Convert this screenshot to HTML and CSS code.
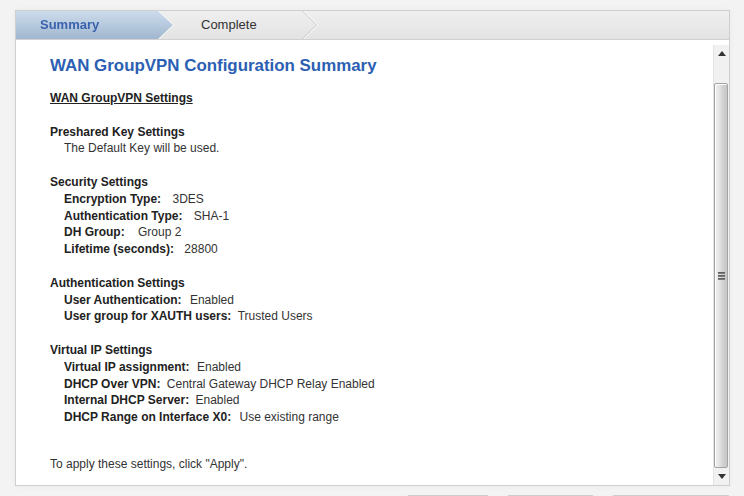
FILE: index.html
```html
<!DOCTYPE html>
<html>
<head>
<meta charset="utf-8">
<link rel="stylesheet" href="styles.css">
</head>
<body>
<div class="panel">
  <div class="tabs">
    <div class="tab-summary-wrap">
      <div class="tab-summary">Summary</div>
    </div>
    <div class="tab-complete">Complete</div>
    <svg class="chev" width="18" height="28" viewBox="0 0 18 28">
      <polyline points="0.5,0 14.5,14 0.5,28" fill="none" stroke="#c9c9c9" stroke-width="1"/>
      <polyline points="1.8,0 15.8,14 1.8,28" fill="none" stroke="#fbfbfb" stroke-width="1"/>
    </svg>
  </div>
  <div class="body">
    <div class="content">
      <h1 class="title">WAN GroupVPN Configuration Summary</h1>
      <div class="line sub">WAN GroupVPN Settings</div>

      <div class="section">
        <div class="line head">Preshared Key Settings</div>
        <div class="line row">The Default Key will be used.</div>
      </div>

      <div class="section">
        <div class="line head">Security Settings</div>
        <div class="line row"><b>Encryption Type:</b> <span class="v g8">3DES</span></div>
        <div class="line row"><b>Authentication Type:</b> <span class="v g8">SHA-1</span></div>
        <div class="line row"><b>DH Group:</b> <span class="v g10">Group 2</span></div>
        <div class="line row"><b>Lifetime (seconds):</b> <span class="v g7">28800</span></div>
      </div>

      <div class="section">
        <div class="line head">Authentication Settings</div>
        <div class="line row"><b>User Authentication:</b> <span class="v g5">Enabled</span></div>
        <div class="line row"><b>User group for XAUTH users:</b> <span class="v g3">Trusted Users</span></div>
      </div>

      <div class="section">
        <div class="line head">Virtual IP Settings</div>
        <div class="line row"><b>Virtual IP assignment:</b> <span class="v g4">Enabled</span></div>
        <div class="line row"><b>DHCP Over VPN:</b> <span class="v g3">Central Gateway DHCP Relay Enabled</span></div>
        <div class="line row"><b>Internal DHCP Server:</b> <span class="v g3">Enabled</span></div>
        <div class="line row"><b>DHCP Range on Interface X0:</b> <span class="v g5">Use existing range</span></div>
      </div>

      <div class="line apply">To apply these settings, click "Apply".</div>
    </div>
    <div class="scrollbar">
      <div class="sb-btn">
        <svg width="8" height="5" viewBox="0 0 8 5"><polygon points="4,0 8,5 0,5" fill="#333"/></svg>
      </div>
      <div class="sb-track">
        <div class="sb-thumb">
          <div class="grip"><i></i><i></i><i></i></div>
        </div>
      </div>
      <div class="sb-btn">
        <svg width="8" height="5" viewBox="0 0 8 5"><polygon points="0,0 8,0 4,5" fill="#333"/></svg>
      </div>
    </div>
  </div>
</div>
<div class="footer">
  <div class="btn b1"></div>
  <div class="btn b2"></div>
  <div class="btn b3"></div>
</div>
</body>
</html>
```

FILE: styles.css
```css
html, body {
  margin: 0;
  padding: 0;
}
body {
  background: #f3f3f3;
  font-family: "Liberation Sans", Arial, sans-serif;
  padding: 10px 14px 0 15px;
  height: 496px;
  box-sizing: border-box;
  overflow: hidden;
}
.panel {
  width: 715px;
  height: 476px;
  box-sizing: border-box;
  border: 1px solid #cfcfcf;
  background: #fff;
  display: flex;
  flex-direction: column;
  box-shadow: 0 0 6px rgba(0,0,0,0.04);
}
.tabs {
  height: 28px;
  flex: none;
  display: flex;
  align-items: stretch;
  background: linear-gradient(#efefef, #e3e3e3);
  border-bottom: 1px solid #d0d0d0;
}
.tab-summary-wrap {
  filter: drop-shadow(1.5px 0 0 rgba(255,255,255,0.95));
  flex: none;
}
.tab-summary {
  width: 133px;
  height: 28px;
  padding-left: 24px;
  line-height: 27px;
  font-size: 13px;
  font-weight: bold;
  color: #3a62ad;
  background: linear-gradient(#cddcec, #a0b6cf);
  clip-path: polygon(0 0, 142px 0, 157px 14px, 142px 28px, 0 28px);
}
.tab-complete {
  width: 101px;
  padding-left: 28px;
  line-height: 27px;
  font-size: 13px;
  color: #333;
  flex: none;
}
.chev {
  display: block;
  flex: none;
}
.body {
  flex: 1;
  display: flex;
  min-height: 0;
}
.content {
  flex: 1;
  padding: 15px 0 0 34px;
  font-size: 12px;
  color: #333;
}
.title {
  margin: 0 0 13px;
  font-size: 16.9px;
  line-height: 22px;
  font-weight: bold;
  color: #2c5fb3;
}
.line {
  line-height: 16.8px;
  height: 16.8px;
  white-space: nowrap;
}
.sub {
  font-weight: bold;
  text-decoration: underline;
  color: #222;
}
.section {
  margin-top: 16.8px;
}
.head {
  font-weight: bold;
  color: #222;
}
.row {
  padding-left: 14px;
}
.row b {
  color: #222;
}
.v.g10 { margin-left: 10px; }
.v.g8 { margin-left: 8px; }
.v.g7 { margin-left: 7px; }
.v.g5 { margin-left: 5px; }
.v.g4 { margin-left: 4px; }
.v.g3 { margin-left: 3px; }
.apply {
  margin-top: 30px;
}
.scrollbar {
  width: 16px;
  flex: none;
  margin-top: 5px;
  background: #f1f1f1;
  border-left: 1px solid #e4e4e4;
  box-sizing: border-box;
  display: flex;
  flex-direction: column;
}
.sb-btn {
  height: 17px;
  display: flex;
  align-items: center;
  justify-content: center;
  flex: none;
}
.sb-track {
  flex: 1;
  display: flex;
  flex-direction: column;
  justify-content: flex-end;
  padding-top: 21px;
}
.sb-thumb {
  flex: 1;
  margin-right: 1px;
  border: 1px solid #a3a3a3;
  border-radius: 2px;
  background: linear-gradient(90deg, #f2f2f2 0%, #e6e6e6 30%, #cfcfcf 70%, #c6c6c6 100%);
  box-shadow: inset 1px 1px 0 #fff;
  display: flex;
  align-items: center;
  justify-content: center;
}
.grip {
  display: flex;
  flex-direction: column;
  gap: 1px;
  margin-left: 1px;
}
.grip i {
  display: block;
  width: 7px;
  height: 2px;
  background: linear-gradient(#555, #888);
}
.footer {
  display: flex;
  justify-content: flex-end;
  gap: 18px;
  margin-top: 9px;
  width: 715px;
}
.btn {
  height: 20px;
  border: 1px solid #cdcdcd;
  border-radius: 2px;
  background: linear-gradient(#f7f7f7, #e6e6e6);
}
.b1 { width: 80px; }
.b2 { width: 85px; }
.b3 { width: 116px; }
```
